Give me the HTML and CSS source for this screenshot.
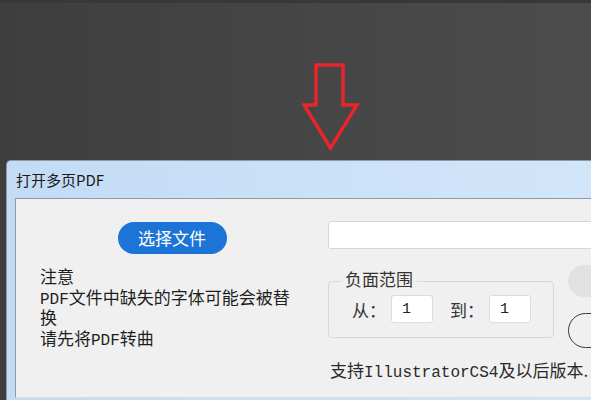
FILE: index.html
```html
<!DOCTYPE html>
<html>
<head>
<meta charset="utf-8">
<link rel="stylesheet" href="styles.css">
</head>
<body>

<!-- 桌面 + 箭头 -->
<div class="desk">
<svg class="arrow" width="58" height="88" viewBox="0 0 58 88">
<polygon points="14,2 41,2 41,42 55,42 28.5,85 2,42 14,42" fill="none" stroke="#e8252c" stroke-width="3.5"/>
</svg>
</div>

<!-- 对话框 -->
<div class="window">
<div class="titlebar">打开多页PDF</div>
<div class="client">

<div class="col-left">
<button class="pick-btn">选择文件</button>
<div class="notes">
<div class="note-line">注意</div>
<div class="note-line"><span class="en">PDF</span>文件中缺失的字体可能会被替换</div>
<div class="note-line">请先将<span class="en">PDF</span>转曲</div>
</div>
</div>

<div class="col-right">
<input class="path" type="text">
<div class="range-row">
<fieldset class="range">
<legend>负面范围</legend>
<div class="range-fields">
<span class="field-label">从：</span>
<input class="num" type="text" value="1">
<span class="field-label">到：</span>
<input class="num" type="text" value="1">
</div>
</fieldset>
<div class="actions">
<button class="btn-gray"></button>
<button class="btn-outline"></button>
</div>
</div>
<div class="support">支持<span class="en">IllustratorCS4</span>及以后版本.</div>
</div>

</div>
</div>

</body>
</html>
```

FILE: styles.css
```css
body {
margin: 0;
width: 591px;
height: 400px;
overflow: hidden;
background: linear-gradient(to right, #3e3e3e, #464646 55%, #4c4c4c);
font-family: 'Noto Sans CJK SC', sans-serif;
}
.desk {
height: 160px;
box-sizing: border-box;
border-top: 3px solid #383838;
padding: 60px 0 0 302px;
}
.arrow {
display: block;
}
.window {
margin-left: 6px;
width: 585px;
height: 240px;
box-sizing: border-box;
border: 1px solid #8d99a6;
border-bottom: none;
border-right: none;
border-radius: 5px 0 0 0;
background: linear-gradient(to right, #c3dbf5, #d2e6fa);
padding-left: 8px;
overflow: hidden;
}
.titlebar {
height: 37px;
line-height: 37px;
padding-left: 1px;
font-size: 15px;
color: #1a1a1a;
}
.client {
display: flex;
height: 200px;
box-sizing: border-box;
background-color: #f0f0f0;
border: 1px solid #8e9aa7;
border-right: none;
border-bottom-color: #dcdcdc;
overflow: hidden;
}
.col-left {
width: 312px;
flex-shrink: 0;
padding-top: 23px;
display: flex;
flex-direction: column;
}
.pick-btn {
align-self: center;
width: 109px;
height: 32px;
border: none;
border-radius: 16px;
background-color: #1b74d6;
color: white;
font-family: 'Noto Sans CJK SC', sans-serif;
font-size: 17px;
line-height: 32px;
padding: 0;
}
.notes {
margin-top: 12px;
padding-left: 24px;
width: 258px;
font-size: 17px;
line-height: 20.5px;
color: #1e1e1e;
}
.notes .en {
line-height: 0;
}
.col-right {
padding-top: 22px;
display: flex;
flex-direction: column;
min-width: 0;
}
.path {
width: 300px;
height: 28px;
box-sizing: border-box;
border: 1px solid #d6d6d6;
border-radius: 3px;
background-color: white;
margin: 0;
}
.range-row {
display: flex;
align-items: flex-start;
gap: 14px;
margin-top: 16px;
}
.range {
margin: 5px 0 0;
width: 226px;
flex-shrink: 0;
box-sizing: border-box;
border: 1px solid #d8d8d8;
border-radius: 4px;
padding: 3px 0 14px 12px;
min-width: 0;
}
.range legend {
padding: 0 4px 4px;
font-size: 17px;
line-height: 18px;
color: #333;
}
.range-fields {
display: flex;
align-items: center;
padding-left: 11px;
}
.field-label {
font-size: 17px;
color: #333;
margin-right: 5px;
}
.num {
width: 42px;
height: 28px;
box-sizing: border-box;
border: 1px solid #dcdcdc;
border-radius: 3px;
background-color: white;
padding: 0 0 0 10px;
margin: 0 17px 0 0;
font-family: 'Liberation Mono', monospace;
font-size: 15px;
color: #222;
}
.actions {
display: flex;
flex-direction: column;
gap: 16px;
}
.btn-gray {
width: 100px;
height: 32px;
border: none;
border-radius: 16px;
background-color: #e1e1e1;
}
.btn-outline {
width: 100px;
height: 35px;
border: 1.5px solid #3a3a3a;
border-radius: 18px;
background-color: transparent;
}
.support {
margin-top: 12px;
margin-left: 2px;
white-space: nowrap;
font-size: 17px;
line-height: 20px;
color: #2a2a2a;
}
.en {
font-family: 'Liberation Mono', monospace;
font-size: 16px;
}
```
